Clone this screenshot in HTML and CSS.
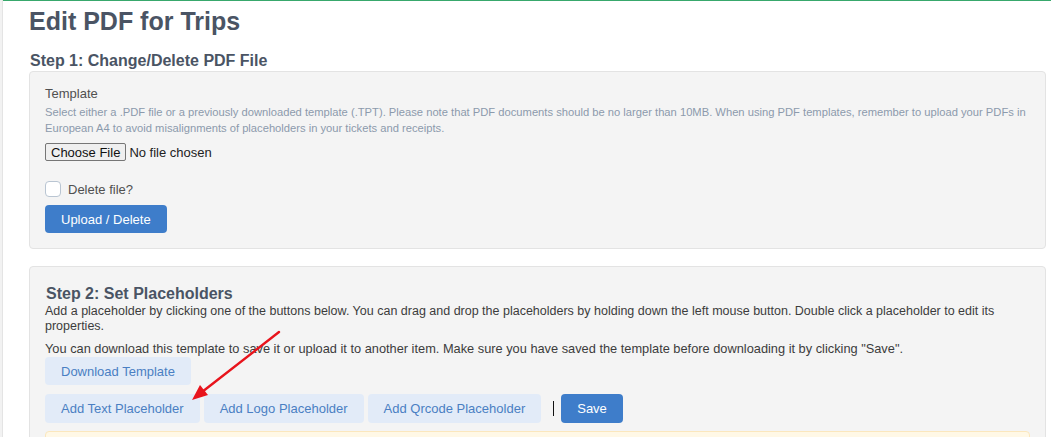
FILE: index.html
```html
<!DOCTYPE html>
<html lang="en">
<head>
  <meta charset="UTF-8">
  <title>Edit PDF for Trips</title>
  <meta name="viewport" content="width=device-width, initial-scale=1.0">
  <link rel="stylesheet" href="styles.css">
</head>
<body>

  <div class="edge"></div>

  <main class="main">
    <h1 class="page-title">Edit PDF for Trips</h1>

    <h2 class="step-title">Step 1: Change/Delete PDF File</h2>
    <form class="panel" action="#" method="POST" enctype="multipart/form-data">
      <label class="field-label" for="template">Template</label>
      <p class="help">Select either a .PDF file or a previously downloaded template (.TPT). Please note that PDF documents should be no larger than 10MB. When using PDF templates, remember to upload your PDFs in European A4 to avoid misalignments of placeholders in your tickets and receipts.</p>
      <input class="file-input" type="file" id="template" name="template" accept=".pdf,.tpt">

      <label class="check-row">
        <input type="checkbox" name="delete">
        <span>Delete file?</span>
      </label>

      <button class="btn btn-primary" type="submit">Upload / Delete</button>
    </form>

    <section class="panel panel-step2">
      <h2 class="step-title inner">Step 2: Set Placeholders</h2>
      <p class="text">Add a placeholder by clicking one of the buttons below. You can drag and drop the placeholders by holding down the left mouse button. Double click a placeholder to edit its properties.</p>
      <p class="text second">You can download this template to save it or upload it to another item. Make sure you have saved the template before downloading it by clicking "Save".</p>

      <button class="btn btn-light download" type="button">Download Template</button>

      <div class="btn-row">
        <button class="btn btn-light" type="button">Add Text Placeholder</button>
        <button class="btn btn-light" type="button">Add Logo Placeholder</button>
        <button class="btn btn-light" type="button">Add Qrcode Placeholder</button>
        <span class="caret" aria-hidden="true"></span>
        <button class="btn btn-primary save" type="button">Save</button>
      </div>

      <div class="notice"></div>
    </section>

    <!-- annotation arrow -->
    <svg class="arrow" width="1051" height="437" viewBox="0 0 1051 437" aria-hidden="true">
      <line x1="279" y1="332" x2="202" y2="392" stroke="#e8141c" stroke-width="2.4" stroke-linecap="round"/>
      <polygon points="192,400 208,395 200,385" fill="#e8141c"/>
    </svg>
  </main>

</body>
</html>
```

FILE: styles.css
```css
body {
  margin: 0;
  display: flex;
  height: 437px;
  overflow: hidden;
  font-family: "Liberation Sans", Arial, sans-serif;
  color: #3a3a3a;
  background: #fff;
}
.edge {
  width: 2px;
  flex: none;
  background: #f2f2f2;
  border-right: 1px solid #e4e4e4;
}
.main {
  flex: 1;
  position: relative;
  border-top: 1px solid #38a86c;
  padding: 0 5px 0 26px;
}
.page-title {
  margin: 6px 0 0;
  font-size: 25px;
  line-height: 28px;
  font-weight: bold;
  color: #4a5464;
}
.step-title {
  margin: 17px 0 1px;
  padding-left: 1px;
  font-size: 16px;
  line-height: 18px;
  font-weight: bold;
  color: #4a5464;
}
.step-title.inner {
  margin: 0 0 1px;
}
.panel {
  background: #f4f4f4;
  border: 1px solid #e3e3e3;
  border-radius: 4px;
  padding: 14px 15px 15px;
}
.panel-step2 {
  margin-top: 17px;
  padding-top: 18px;
  padding-bottom: 20px;
}
.field-label {
  display: block;
  font-size: 13px;
  line-height: 16px;
  color: #505050;
}
.help {
  margin: 2px 0 0;
  font-size: 11.2px;
  line-height: 16px;
  color: #8c9aac;
}
.file-input {
  display: block;
  margin-top: 7px;
  font-family: "Liberation Sans", Arial, sans-serif;
  font-size: 13px;
  color: #222;
  height: 18px;
}
.file-input::file-selector-button {
  font: inherit;
  height: 18px;
  padding: 0 5px;
  margin-right: 3px;
  background: #efefef;
  border: 1px solid #767676;
  border-radius: 2px;
  color: #111;
}
.check-row {
  display: flex;
  align-items: center;
  gap: 7px;
  margin-top: 20px;
  height: 16px;
  font-size: 13px;
  color: #505050;
}
.check-row input {
  appearance: none;
  margin: 0;
  width: 16px;
  height: 16px;
  background: #fff;
  border: 1px solid #b9c5d2;
  border-radius: 4px;
}
.btn {
  display: block;
  font-family: "Liberation Sans", Arial, sans-serif;
  font-size: 13px;
  height: 28px;
  padding: 0 16px;
  border: 0;
  border-radius: 4px;
}
.panel > .btn-primary {
  margin-top: 8px;
}
.btn-primary {
  background: #3e7dca;
  color: #fff;
}
.btn-light {
  background: #e2ebf8;
  color: #4a7fc3;
}
.text {
  margin: 1px 0 0;
  font-size: 12.5px;
  line-height: 15px;
  color: #3c3c3c;
}
.text.second {
  margin-top: 7px;
  font-size: 12.8px;
}
.download {
  margin-top: 1px;
}
.btn-row {
  display: flex;
  align-items: center;
  gap: 4px;
  margin-top: 9px;
}
.btn-row .btn {
  height: 29px;
}
.caret {
  width: 1px;
  height: 15px;
  background: #111;
  margin: 0 3px 0 8px;
}
.save {
  padding: 0 16px;
}
.notice {
  margin-top: 8px;
  height: 40px;
  background: #fff8e6;
  border: 1px solid #fbe7bd;
  border-radius: 4px;
}
.arrow {
  position: absolute;
  left: -3px;
  top: -1px;
  pointer-events: none;
}
```
